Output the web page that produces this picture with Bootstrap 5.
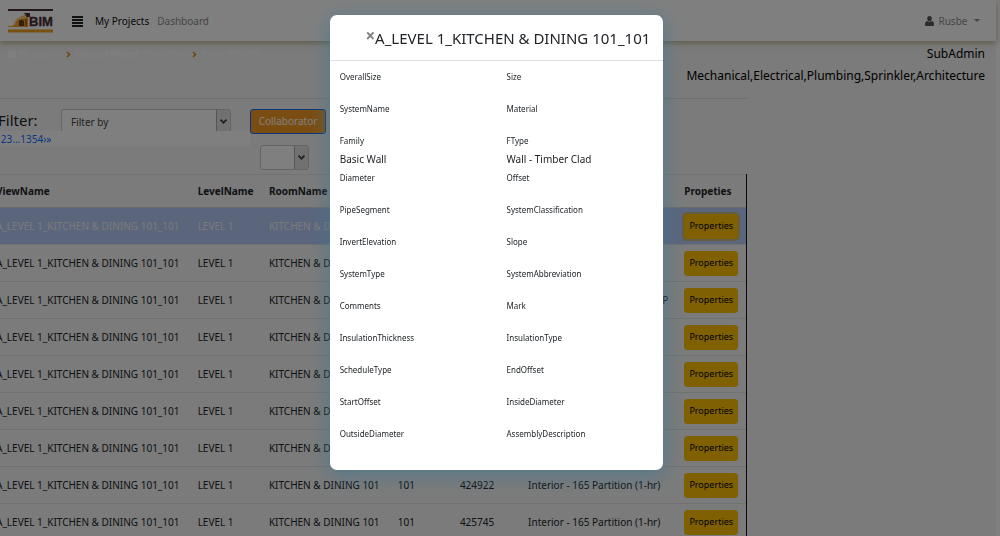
<!DOCTYPE html>
<html lang="en">
<head>
<meta charset="utf-8">
<meta name="viewport" content="width=device-width, initial-scale=1">
<title>BIM - Projects</title>
<link href="https://cdn.jsdelivr.net/npm/bootstrap@5.3.0/dist/css/bootstrap.min.css" rel="stylesheet">
<style>
  body { font: 10px/16px "Noto Sans", "Open Sans", sans-serif; color: #212529; overflow: hidden; height: 100vh; }
  a { text-decoration: none; }
  .page { background: #f6f6f6; margin-right: 4px; min-height: 100vh; }
  .topbar { --bs-navbar-padding-y: 0; height: 41px; background: #fff; box-shadow: 0 2px 6px rgba(130, 110, 40, .5); position: relative; }
  .topbar a { color: #8c8c8c; }
  .topbar a.current { color: #111; }
  .topbar a, .topbar button { line-height: 16px; }
  .menu-btn { margin-left: 15px; margin-right: 6px; }
  .subhead { height: 57px; padding-top: 2px; }
  .trail { font-size: 8px; padding-top: 3px; }
  .trail a, .trail li { color: #fff; }
  .roles { font-size: 12px; line-height: 22px; color: #000; padding-right: 11px; }
  .content-col { margin-left: -12px; width: calc(75% + 12px); border-top: 1px solid #dedede; }
  .filters { padding: 10px 0 0 10px; }
  .filter-label { font-size: 15px; line-height: 22px; width: 63px; }
  .pick { appearance: none; height: 25px; font-size: 10px; color: #444; padding: 0 24px 0 9px; border: 1px solid #c8c8c8; border-radius: 3px;
    background: url("data:image/svg+xml,%3Csvg xmlns='http://www.w3.org/2000/svg' viewBox='0 0 14 24'%3E%3Cpath d='M0 0h14v24H0z' fill='%23e2e2e2'/%3E%3Cpath d='M.5 0v24' stroke='%23aaa'/%3E%3Cpath d='M4.500 10l3 3 3-3' fill='none' stroke='%23444' stroke-width='1.800'/%3E%3C/svg%3E") right center / 14px 24px no-repeat #fff; }
  .pick-filter { width: 170px; }
  .pick-size { width: 49px; margin-left: 272px; }
  .btn-collab { --bs-btn-color: #fff; --bs-btn-bg: #f79a25; --bs-btn-border-color: #0d6efd; --bs-btn-hover-bg: #e88b16; --bs-btn-hover-color: #fff;
    --bs-btn-font-size: 10px; --bs-btn-padding-y: 0; --bs-btn-padding-x: 3px; --bs-btn-border-radius: 3px; height: 25px; width: 76px; margin-left: 19px; }
  .pager { position: relative; z-index: 1; width: 262px; height: 16px; margin-top: -3px; padding-left: 7px; background: #fff; border-radius: 0 3px 3px 0; }
  .pager a { color: #0d6efd; }
  .size-row { margin-top: -2px; }
  .grid-wrap { margin-top: 4px; border-right: 1px solid #111; }
  .grid { table-layout: fixed; --bs-table-bg: transparent; margin: 0; white-space: nowrap; border-top: 1px solid #e4e4e4; }
  .grid > :not(caption) > * > * { padding: 0 8px; height: 37px; vertical-align: middle; border-color: #dee2e6; }
  .grid > thead > tr > th { height: 33px; border-bottom: 1px solid #d4d8dc; }
  .grid > tbody > tr.chosen > td { background: #b6ccfa; color: #f4f4f4; }
  .btn-prop { --bs-btn-font-size: 9px; --bs-btn-padding-y: 0; --bs-btn-padding-x: 0; --bs-btn-border-radius: 3px; height: 25px; width: 54px; }
  .chosen .btn-prop { box-shadow: 0 0 0 2px rgba(222, 170, 12, .5); }
  .details { --bs-modal-border-radius: 7px; --bs-modal-border-width: 0; padding-right: 7px; }
  .details .modal-dialog { max-width: 33.6%; margin: 15px auto 0; }
  .details .modal-content { box-shadow: 0 4px 20px rgba(64, 120, 146, .75); }
  .details .modal-header { height: 46px; padding: 0 13px; border-color: #dee2e6; }
  .details .modal-title { font-size: 15px; line-height: 22px; font-weight: 400; }
  .close-x { border: 0; background: none; padding: 0; font-size: 17px; line-height: 16px; color: #7f7f7f; font-weight: 700; margin: 0 0 4px; }
  .details .modal-body { padding: 8px 0 12px 10px; }
  .field-list { margin-right: -10px; }
  .field dt { font-size: 8px; line-height: 16px; font-weight: 400; }
  .field dd { margin: 0; min-height: 16px; line-height: 21px; }
</style>
</head>
<body>
<div class="page">
  <nav class="navbar navbar-expand topbar d-flex flex-nowrap justify-content-start ps-2 pe-3">
    <a href="#" aria-label="BIM home" class="d-flex">
      <svg width="46" height="27" viewBox="0 0 46 27">
        <path d="M0 3h45" stroke="#4b3036" stroke-width="2"/>
        <path d="M0 24h45" stroke="#f0a01c" stroke-width="3"/>
        <path d="M0 19h5c1-6 6-11 15-11v12H0z" fill="#f2a51f"/>
        <path d="M6 18c1-5 5-8 12-8" fill="none" stroke="#fff" stroke-width="1"/>
        <path d="M16 6h6v4h-3z" fill="#4b3036"/>
        <path d="M11 19v-4c0-3 5-3 5 0v4z" fill="#6b3e1c"/>
        <path d="M17 19v-7h2v7z" fill="#a8661c"/>
        <text x="21" y="19" font-family="'Liberation Sans',sans-serif" font-size="13" font-weight="700" fill="#4b3036" stroke="#4b3036" stroke-width=".4">BIM</text>
      </svg>
    </a>
    <button type="button" class="menu-btn border-0 bg-transparent p-0 d-flex" aria-label="Toggle menu">
      <svg width="16" height="12" viewBox="0 0 16 12"><path d="M3 2h11M3 5h11M3 8h11M3 11h11" stroke="#222" stroke-width="2"/></svg>
    </button>
    <a href="#" class="current ms-1">My Projects</a>
    <a href="#" class="ms-2">Dashboard</a>
    <a href="#" class="ms-auto d-flex align-items-center gap-1 dropdown-toggle">
      <svg width="9" height="10" viewBox="0 0 9 10"><path d="M4.500 0C6 0 6.800 1 6.800 2.500S6 5.500 4.500 5.500 2.200 4 2.200 2.500 3 0 4.500 0zM2 5c1.500 1.300 3.500 1.300 5 0 1.500.3 2 2 2 3.500 0 1-.6 1.500-1.500 1.500h-6C.6 10 0 9.500 0 8.500 0 7 .5 5.300 2 5z" fill="#555"/></svg>
      Rusbe
    </a>
  </nav>

  <header class="subhead d-flex justify-content-between">
    <ol class="trail list-unstyled d-flex gap-1 ps-1 ms-1 mb-0 text-nowrap">
      <li><a href="#"><svg width="8" height="7" viewBox="0 0 8 7"><path d="M0 0h8v7H0z" fill="#fff"/></svg> My projects</a></li>
      <li aria-hidden="true"><svg width="5" height="7" viewBox="0 0 5 7"><path d="M1 1l2.500 2.500L1 6" fill="none" stroke="#e08a1c" stroke-width="1.500"/></svg></li>
      <li><b>Selected Project:</b> Revira Hotel</li>
      <li aria-hidden="true"><svg width="5" height="7" viewBox="0 0 5 7"><path d="M1 1l2.500 2.500L1 6" fill="none" stroke="#e08a1c" stroke-width="1.500"/></svg></li>
      <li>Revira Hotel FM</li>
    </ol>
    <div class="roles text-end">
      <div>SubAdmin</div>
      <div>Mechanical,Electrical,Plumbing,Sprinkler,Architecture</div>
    </div>
  </header>

  <main class="content-col">
    <div class="filters d-flex align-items-start">
      <label class="filter-label" for="filter">Filter:</label>
      <select id="filter" class="pick pick-filter"><option>Filter by</option></select>
      <button type="button" class="btn btn-collab">Collaborator</button>
    </div>
    <nav class="pager" aria-label="Pages"><a href="#">1</a><a href="#">2</a><a href="#">3</a><a href="#">...</a><a href="#">1354</a><a href="#">›</a><a href="#">»</a></nav>
    <div class="size-row d-flex">
      <select class="pick pick-size" aria-label="Rows per page"><option></option></select>
    </div>
    <div class="grid-wrap">
      <table class="table grid">
        <colgroup>
          <col style="width:26.6%"><col style="width:9.4%"><col style="width:17%"><col style="width:8.2%"><col style="width:9%"><col style="width:20.6%"><col style="width:9.2%">
        </colgroup>
        <thead><tr><th>ViewName</th><th>LevelName</th><th>RoomName</th><th></th><th></th><th></th><th>Propeties</th></tr></thead>
        <tbody id="rows"></tbody>
      </table>
    </div>
  </main>
</div>

<div class="modal-backdrop show"></div>
<div class="modal show d-block details" tabindex="-1" role="dialog" aria-labelledby="detailsTitle">
  <div class="modal-dialog">
    <div class="modal-content">
      <div class="modal-header justify-content-end">
        <button type="button" class="close-x" aria-label="Close">×</button>
        <h5 class="modal-title" id="detailsTitle">A_LEVEL 1_KITCHEN &amp; DINING 101_101</h5>
      </div>
      <div class="modal-body">
        <dl class="field-list d-flex flex-wrap mb-0" id="fields"></dl>
      </div>
    </div>
  </div>
</div>

<script src="https://cdn.jsdelivr.net/npm/bootstrap@5.3.0/dist/js/bootstrap.bundle.min.js"></script>
<script>
  const rows = [
    ['', '', ''], ['', '', ''], ['', '', 'Exterior - Block on Stud WRAP'], ['', '', ''], ['', '', ''], ['', '', ''], ['', '', ''],
    ['101', '424922', 'Interior - 165 Partition (1-hr)'],
    ['101', '425745', 'Interior - 165 Partition (1-hr)']
  ];
  document.getElementById('rows').innerHTML = rows.map((r, i) =>
    `<tr class="${i ? '' : 'chosen'}"><td>A_LEVEL 1_KITCHEN &amp; DINING 101_101</td><td>LEVEL 1</td><td>KITCHEN &amp; DINING 101</td>` +
    r.map(c => `<td>${c}</td>`).join('') +
    '<td><button type="button" class="btn btn-warning btn-prop">Properties</button></td></tr>').join('');

  const fields = [
    ['OverallSize'], ['Size'], ['SystemName'], ['Material'], ['Family', 'Basic Wall'], ['FType', 'Wall - Timber Clad'],
    ['Diameter'], ['Offset'], ['PipeSegment'], ['SystemClassification'], ['InvertElevation'], ['Slope'],
    ['SystemType'], ['SystemAbbreviation'], ['Comments'], ['Mark'], ['InsulationThickness'], ['InsulationType'],
    ['ScheduleType'], ['EndOffset'], ['StartOffset'], ['InsideDiameter'], ['OutsideDiameter'], ['AssemblyDescription']
  ];
  document.getElementById('fields').innerHTML = fields.map(([k, v = '']) =>
    `<div class="w-50 field"><dt>${k}</dt><dd>${v}</dd></div>`).join('');
</script>
</body>
</html>
